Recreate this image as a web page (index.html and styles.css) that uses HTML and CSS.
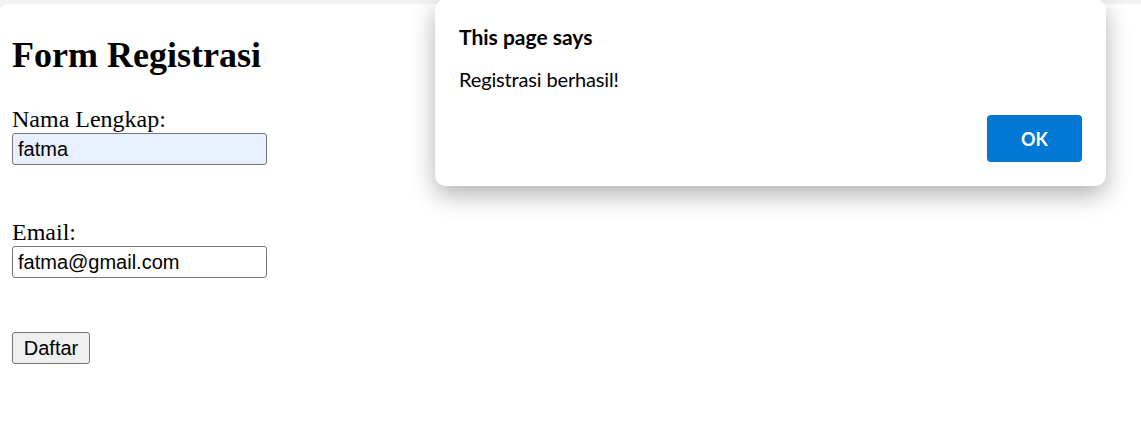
FILE: index.html
```html
<!DOCTYPE html>
<html lang="id">
<head>
<meta charset="utf-8">
<title>Form Registrasi</title>
<link rel="stylesheet" href="styles.css">
</head>
<body>
<div class="page">
  <h2 class="title">Form Registrasi</h2>
  <form class="form">
    <label class="label" for="nama">Nama Lengkap:</label>
    <input class="field field-autofill" id="nama" type="text" value="fatma">
    <label class="label" for="email">Email:</label>
    <input class="field" id="email" type="email" value="fatma@gmail.com">
    <button class="submit" type="button">Daftar</button>
  </form>
</div>
<div class="dialog" role="alertdialog">
  <div class="dialog-title">This page says</div>
  <div class="dialog-msg">Registrasi berhasil!</div>
  <div class="dialog-actions">
    <button class="dialog-ok" type="button">OK</button>
  </div>
</div>
</body>
</html>
```

FILE: styles.css
```css
html, body {
  margin: 0;
  padding: 0;
}
body {
  background: #f3f3f3;
  width: 1141px;
  height: 438px;
  overflow: hidden;
  position: relative;
  padding-top: 4px;
  box-sizing: border-box;
}
.page {
  background: #ffffff;
  border-top-left-radius: 8px;
  height: 434px;
  padding: 1px 12px 0 12px;
  box-sizing: border-box;
  font-family: "Liberation Serif", "Times New Roman", serif;
  color: #000;
}
.title {
  font-size: 36px;
  font-weight: bold;
  margin: 30px 0 30px 0;
  line-height: 41px;
}
.form {
  display: flex;
  flex-direction: column;
  align-items: flex-start;
}
.label {
  font-size: 24px;
  line-height: 27px;
  display: block;
}
.field {
  box-sizing: border-box;
  width: 255px;
  height: 32px;
  margin: 0 0 54px 0;
  padding: 0 5px;
  border: 1px solid #767676;
  border-radius: 3px;
  font-family: "Liberation Sans", Arial, sans-serif;
  font-size: 20px;
  color: #000;
  background: #fff;
}
.field-autofill {
  background: #e8f0fe;
}
#email {
  margin-bottom: 54px;
}
.submit {
  box-sizing: border-box;
  width: 78px;
  height: 32px;
  padding: 0;
  border: 1px solid #767676;
  border-radius: 3px;
  background: #efefef;
  font-family: "Liberation Sans", Arial, sans-serif;
  font-size: 20px;
  color: #000;
}
.dialog {
  position: absolute;
  left: 435px;
  top: -1px;
  width: 671px;
  height: 187px;
  box-sizing: border-box;
  background: #ffffff;
  border-radius: 11px;
  box-shadow: 0 9px 24px rgba(0, 0, 0, 0.3);
  padding: 25px 24px 24px 24px;
  display: flex;
  flex-direction: column;
  font-family: Lato, "Noto Sans", sans-serif;
  color: #000;
}
.dialog-title {
  font-size: 21px;
  font-weight: bold;
  line-height: 26px;
}
.dialog-msg {
  font-size: 20px;
  line-height: 24px;
  margin-top: 17px;
  letter-spacing: -0.15px;
}
.dialog-actions {
  margin-top: auto;
  display: flex;
  justify-content: flex-end;
}
.dialog-ok {
  width: 95px;
  height: 47px;
  border: none;
  border-radius: 4px;
  background: #0078d4;
  color: #ffffff;
  font-family: Lato, "Noto Sans", sans-serif;
  font-weight: bold;
  font-size: 18px;
}
```
